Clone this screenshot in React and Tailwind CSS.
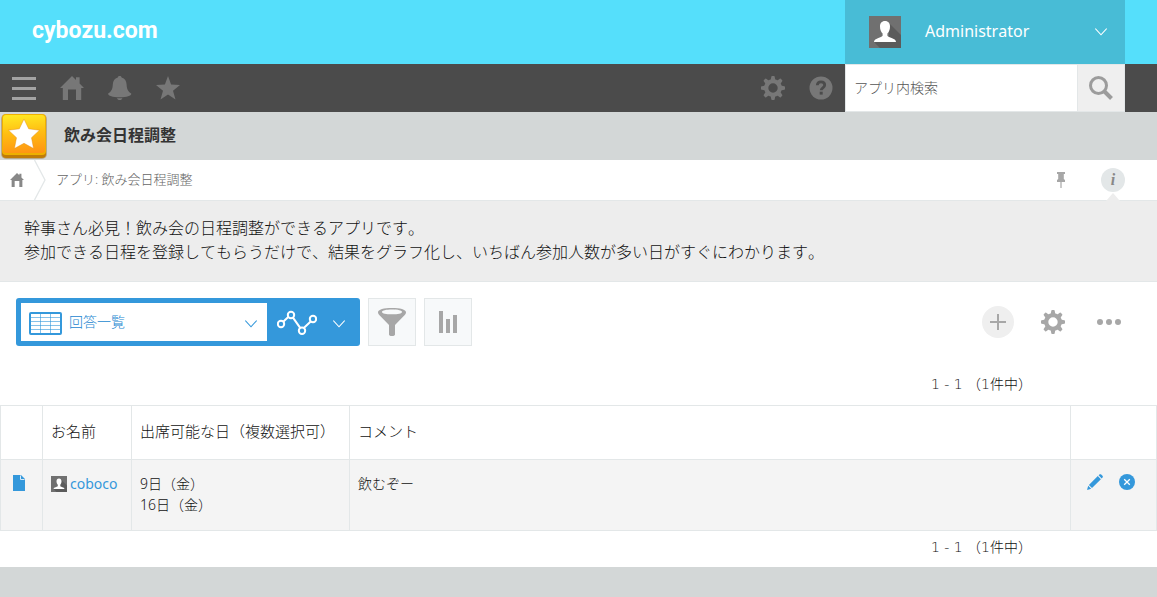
import React from "react";

const GEAR_ANGLES = [0, 45, 90, 135, 180, 225, 270, 315];

function GearIcon() {
  return (
    <svg width="24" height="24" viewBox="0 0 24 24" fill="currentColor" aria-hidden="true">
      <circle cx="12" cy="12" r="6.8" fill="none" stroke="currentColor" strokeWidth="4.2" />
      {GEAR_ANGLES.map((a) => (
        <path key={a} d="M9.6 4.5 10.3 0.7Q10.4 0 11 0h2q.6 0 .7.7L14.4 4.5z" transform={`rotate(${a} 12 12)`} />
      ))}
    </svg>
  );
}

function HomeIcon({ size }) {
  return (
    <svg width={size} height={size} viewBox="0 0 24 24" fill="currentColor" aria-hidden="true">
      <path d="M12 0 16 4V1.3h3.6V7.5L24 12h-2.8v12H16V13.6H8V24H2.8V12H0z" />
    </svg>
  );
}

function BellIcon() {
  return (
    <svg width="24" height="24" viewBox="0 0 24 24" fill="currentColor" aria-hidden="true">
      <path d="M11.700 0c1.200 0 1.900.6 1.900 1.500 3.400 1 4.700 3.500 5 7.100.3 4.800 1.400 7 4.600 9 .7 1.700-3.900 3.700-11.500 3.700S-.5 19.300.2 17.600c3.200-2 4.300-4.200 4.600-9 .3-3.600 1.600-6.100 5-7.100C9.800.6 10.500 0 11.700 0z" />
      <path d="M9 22.200h5.400c-.3 1.200-1.300 1.800-2.700 1.800s-2.400-.6-2.700-1.800z" />
    </svg>
  );
}

function StarIcon() {
  return (
    <svg width="24" height="24" viewBox="0 0 24 24" fill="currentColor" aria-hidden="true">
      <path d="M12 0 15.100 8.600 24 9 17 14.700 19.500 23.500 12 18.500 4.500 23.500 7 14.700 0 9 8.900 8.600z" />
    </svg>
  );
}

function Avatar({ size }) {
  return (
    <svg width={size} height={size} viewBox="0 0 32 32" aria-hidden="true" className="shrink-0">
      <path fill="#707070" d="M0 0h32v32H0z" />
      <path fill="#5b5b5b" d="M20 7 32 19v13H11L5.500 26.500 20 20z" />
      <path
        fill="#fff"
        d="M16 5c3.300 0 5 2.300 5 5.500 0 3-1 5.500-2.600 7v2.300c.4 1.300 3.600 1.800 6.300 3.200 1.500.8 2.200 1.700 2.300 3H5c.1-1.300.8-2.200 2.300-3 2.700-1.400 5.900-1.900 6.300-3.200v-2.300C12 16 11 13.500 11 10.500 11 7.300 12.700 5 16 5z"
      />
    </svg>
  );
}

function ChevronDown() {
  return (
    <svg width="12" height="8" viewBox="0 0 12 8" fill="none" stroke="currentColor" strokeWidth="1.100" aria-hidden="true">
      <path d="M0.300 0.500 6 6.800 11.700 0.500" />
    </svg>
  );
}

function AppIcon() {
  return (
    <svg width="48" height="48" viewBox="0 0 48 48" aria-hidden="true" className="shrink-0">
      <defs>
        <linearGradient id="appFace" x1="0.500" y1="0" x2="0.600" y2="1">
          <stop offset="0" stopColor="#ffe722" />
          <stop offset="0.450" stopColor="#ffbe12" />
          <stop offset="1" stopColor="#ff9514" />
        </linearGradient>
      </defs>
      <rect x="1" y="2" width="46" height="45" rx="5" fill="#b9a98a" />
      <rect x="2" y="4" width="44" height="42" rx="4" fill="#c07c08" />
      <rect x="2" y="2" width="44" height="41" rx="4" fill="#eeb000" />
      <rect x="3" y="3" width="42" height="38" rx="3" fill="url(#appFace)" />
      <path
        d="M24 7 28.700 16.800 39.500 18.200 31.500 25.700 33.600 36.500 24 31.300 14.400 36.500 16.500 25.700 8.500 18.200 19.300 16.800z"
        fill="#fff"
        stroke="#e58a10"
        strokeOpacity="0.450"
        strokeWidth="1"
      />
    </svg>
  );
}

function NavButton({ label, children, className = "text-[#777]" }) {
  return (
    <button type="button" aria-label={label} className={`flex size-12 items-center justify-center ${className}`}>
      {children}
    </button>
  );
}

function ToolButton({ label, children }) {
  return (
    <button type="button" aria-label={label} className="flex size-12 items-center justify-center border border-[#e3e7e8] bg-[#f7f9fa] text-[#a7a7a7]">
      {children}
    </button>
  );
}

function Pager() {
  return (
    <div className="flex justify-end pr-[125px] font-['DejaVu_Sans','Noto_Sans_CJK_JP',sans-serif] text-sm whitespace-pre">
      1 - 1 （1件中）
    </div>
  );
}

function Header() {
  return (
    <header className="flex h-16 items-center justify-between bg-[#55dffb] pr-8 pl-8">
      <a href="#" className="pb-[2px] font-['Roboto',sans-serif] text-[23px] leading-8 font-bold text-white">
        cybozu.com
      </a>
      <button type="button" className="flex h-16 w-[280px] items-center bg-[#48bcd6] px-6 text-left text-base font-normal text-white">
        <Avatar size={32} />
        <span className="flex-1 pb-[2px] pl-6">Administrator</span>
        <span className="-mr-[6px]">
          <ChevronDown />
        </span>
      </button>
    </header>
  );
}

function NavBar() {
  return (
    <nav className="flex h-12 items-center bg-[#4b4b4b] pr-8">
      <NavButton label="メニュー" className="text-[#a3a3a3]">
        <svg width="24" height="24" viewBox="0 0 24 24" fill="currentColor" aria-hidden="true">
          <path d="M0 1h24v3H0zM0 11h24v3H0zM0 21h24v3H0z" />
        </svg>
      </NavButton>
      <NavButton label="ポータル">
        <HomeIcon size={24} />
      </NavButton>
      <NavButton label="通知">
        <BellIcon />
      </NavButton>
      <NavButton label="ブックマーク">
        <StarIcon />
      </NavButton>
      <div className="flex-1" />
      <NavButton label="設定">
        <GearIcon />
      </NavButton>
      <NavButton label="ヘルプ">
        <svg width="24" height="24" viewBox="0 0 24 24" aria-hidden="true">
          <circle cx="12" cy="12" r="11.500" fill="currentColor" />
          <path d="M8.300 9.300C8.400 6.900 10 5.900 12 5.900c2.200 0 3.700 1.200 3.700 3.100 0 2.900-3.500 2.700-3.500 5.300" fill="none" stroke="#4b4b4b" strokeWidth="2.800" />
          <path d="M10.700 15.700h3v2.900h-3z" fill="#4b4b4b" />
        </svg>
      </NavButton>
      <form role="search" className="flex h-12 w-[280px] border border-[#e3e7e8] bg-white">
        <input
          type="text"
          aria-label="アプリ内検索"
          placeholder="アプリ内検索"
          className="min-w-0 flex-1 px-2 text-sm text-[#333] placeholder:text-[#555] focus:outline-none"
        />
        <button type="button" aria-label="検索" className="flex w-[47px] items-center justify-center border-l border-[#e3e7e8] bg-[#efefef] text-[#9c9c9c]">
          <svg width="24" height="24" viewBox="0 0 24 24" fill="none" stroke="currentColor" aria-hidden="true">
            <circle cx="9.500" cy="9.500" r="8" strokeWidth="3" />
            <path d="m15.500 15.500 7 7" strokeWidth="4" />
          </svg>
        </button>
      </form>
    </nav>
  );
}

function Breadcrumb() {
  return (
    <div className="flex h-[41px] items-center border-b border-[#e3e7e8] bg-white pr-5 text-[13px] text-[#666]">
      <a href="#" aria-label="ホーム" className="flex w-[34px] justify-center text-[#888]">
        <HomeIcon size={14} />
      </a>
      <svg width="12" height="40" viewBox="0 0 12 40" fill="none" stroke="#e3e7e8" strokeWidth="1.300" aria-hidden="true">
        <path d="M0.500 0 11 20 0.500 40" />
      </svg>
      <span className="flex-1 pl-[10px]">アプリ: 飲み会日程調整</span>
      <button type="button" aria-label="固定する" className="flex h-10 w-9 items-center justify-center text-[#a7a7a7]">
        <svg width="8" height="16" viewBox="0 0 8 16" fill="currentColor" aria-hidden="true">
          <path d="M0 0h8v2H6.800v5L8 8v2H4.600v6H3.400v-6H0V8l1.200-1V2H0z" />
        </svg>
      </button>
      <button type="button" aria-label="アプリの説明" className="relative ml-[10px] flex h-10 w-12 items-center justify-center">
        <span className="flex size-6 items-center justify-center rounded-full bg-[#e3e7e8] font-['Liberation_Serif',serif] text-base leading-6 font-bold text-[#888] italic">
          i
        </span>
        <svg width="14" height="8" viewBox="0 0 14 8" className="absolute -bottom-px left-[17px]" aria-hidden="true">
          <path d="M0 8 7 0l7 8z" fill="#ededed" />
        </svg>
      </button>
    </div>
  );
}

function Toolbar() {
  return (
    <div className="flex items-center gap-2 pr-5 pl-4">
      <div className="flex h-12 w-[344px] items-center rounded-[3px] bg-[#3498db] p-[5px] pr-0">
        <div className="relative flex h-[38px] w-[246px] items-center bg-white text-[#3498db]">
          <svg width="33" height="23" viewBox="0 0 33 23" fill="none" stroke="currentColor" className="mt-[2px] ml-2 shrink-0" aria-hidden="true">
            <path d="M1 5.500h31M1 9.500h31M1 13.500h31M1 17.500h31M11.500 1v21M21.500 1v21" opacity="0.600" />
            <rect x="1" y="1" width="31" height="21" rx="1" strokeWidth="2" />
          </svg>
          <select aria-label="一覧" className="h-[38px] flex-1 appearance-none bg-transparent pl-[7px] text-sm text-[#1a86d0] focus:outline-none">
            <option>回答一覧</option>
          </select>
          <span className="pointer-events-none absolute top-[17px] right-[10px]">
            <ChevronDown />
          </span>
        </div>
        <button type="button" aria-label="グラフ" className="flex h-12 flex-1 items-center gap-4 pl-[10px] text-white">
          <svg width="40" height="26" viewBox="0 0 40 26" fill="none" stroke="currentColor" strokeWidth="2" aria-hidden="true">
            <path d="m6.500 12.500 5-4.700M15.800 8.300l7.400 10.500M26.800 19l7.400-7" />
            <circle cx="4" cy="15" r="3.200" />
            <circle cx="14" cy="6" r="3.200" />
            <circle cx="25" cy="21.800" r="3.200" />
            <circle cx="36" cy="10" r="3.200" />
          </svg>
          <span className="pt-[3px]">
            <ChevronDown />
          </span>
        </button>
      </div>
      <ToolButton label="絞り込む">
        <svg width="28" height="28" viewBox="0 0 28 28" fill="currentColor" aria-hidden="true">
          <path fillRule="evenodd" d="M14 0c8 0 14 1.500 14 4.300 0 1.200-.5 2-1.500 3L17 17v9.500c0 .8-.8 1.500-3 1.500s-3-.7-3-1.500V17L1.500 7.300C.5 6.300 0 5.500 0 4.300 0 1.500 6 0 14 0zm0 1.500C8 1.500 4 2.400 4 3.900s4 2.300 10 2.300 10-.8 10-2.300-4-2.400-10-2.400z" />
        </svg>
      </ToolButton>
      <ToolButton label="集計する">
        <svg width="18" height="22" viewBox="0 0 18 22" fill="currentColor" aria-hidden="true">
          <path d="M0 0h4v22H0zM7 8h4v14H7zM14 4h4v18h-4z" />
        </svg>
      </ToolButton>
      <div className="ml-auto flex text-[#a7a7a7]">
        <button type="button" aria-label="レコードを追加する" className="flex h-12 w-[54px] items-center justify-center">
          <span className="flex size-8 items-center justify-center rounded-full bg-[#efefef]">
            <svg width="16" height="16" viewBox="0 0 16 16" fill="currentColor" aria-hidden="true">
              <path d="M7 0h2v7h7v2H9v7H7V9H0V7h7z" />
            </svg>
          </span>
        </button>
        <button type="button" aria-label="アプリを設定する" className="flex h-12 w-14 items-center justify-center">
          <GearIcon />
        </button>
        <button type="button" aria-label="その他" className="flex h-12 w-14 items-center justify-center">
          <svg width="24" height="6" viewBox="0 0 24 6" fill="currentColor" aria-hidden="true">
            <circle cx="3" cy="3" r="3" />
            <circle cx="12" cy="3" r="3" />
            <circle cx="21" cy="3" r="3" />
          </svg>
        </button>
      </div>
    </div>
  );
}

function RecordTable() {
  const th = "border border-[#e3e7e8] px-2 pb-[2px] text-left text-[15px] font-light";
  const td = "border border-[#e3e7e8] px-2 pt-[13px] align-top";
  return (
    <table className="w-full table-fixed border-collapse text-sm leading-[21px]">
      <colgroup>
        <col className="w-[42px]" />
        <col className="w-[89px]" />
        <col className="w-[218px]" />
        <col />
        <col className="w-[86px]" />
      </colgroup>
      <thead>
        <tr className="h-[54px]">
          <th className={th} />
          <th className={th}>お名前</th>
          <th className={th}>出席可能な日（複数選択可）</th>
          <th className={th}>コメント</th>
          <th className={th} />
        </tr>
      </thead>
      <tbody>
        <tr className="h-[71px] bg-[#f4f4f4]">
          <td className={td}>
            <a href="#" aria-label="レコードの詳細" className="flex h-5 items-center pl-1 text-[#3498db]">
              <svg width="12" height="16" viewBox="0 0 12 16" aria-hidden="true">
                <path d="M0 0h8l4 4v12H0z" fill="currentColor" />
                <path d="M7.500 0.500v4H11.500" fill="none" stroke="#d6eaf8" />
              </svg>
            </a>
          </td>
          <td className={td}>
            <a href="#" className="flex items-center gap-[3px] font-normal text-[#3498db]">
              <Avatar size={16} />
              coboco
            </a>
          </td>
          <td className={td}>
            9日（金）
            <br />
            16日（金）
          </td>
          <td className={td}>飲むぞー</td>
          <td className={td}>
            <div className="flex h-[18px] items-center gap-4 pl-2 text-[#3498db]">
              <button type="button" aria-label="編集">
                <svg width="16" height="16" viewBox="0 0 16 16" fill="currentColor" className="block" aria-hidden="true">
                  <path d="m0 16 1.200-4.200 3 3zM1.900 11 10.800 2.100l3.100 3.100L5 14.100zM11.600 1.300 12.400.500c.5-.5 1.300-.5 1.800 0l1.300 1.300c.5.500.5 1.300 0 1.800l-.8.800z" />
                </svg>
              </button>
              <button type="button" aria-label="削除">
                <svg width="16" height="16" viewBox="0 0 16 16" className="block" aria-hidden="true">
                  <circle cx="8" cy="8" r="8" fill="currentColor" />
                  <path d="m5.200 5.200 5.600 5.600M10.800 5.200l-5.600 5.600" stroke="#fff" strokeWidth="1.300" />
                </svg>
              </button>
            </div>
          </td>
        </tr>
      </tbody>
    </table>
  );
}

export default function App() {
  return (
    <div className="min-h-screen bg-[#d3d7d7] font-['Noto_Sans','Noto_Sans_CJK_JP',sans-serif] font-light text-[#111] [font-kerning:none]">
      <Header />
      <NavBar />
      <div className="flex h-12 items-center gap-4">
        <AppIcon />
        <h1 className="pb-[2px] text-base font-bold text-[#333]">飲み会日程調整</h1>
      </div>
      <Breadcrumb />
      <p className="border-b border-[#e3e7e8] bg-[#ededed] px-6 pt-[15px] pb-[17px] text-base">
        幹事さん必見！飲み会の日程調整ができるアプリです。
        <br />
        参加できる日程を登録してもらうだけで、結果をグラフ化し、いちばん参加人数が多い日がすぐにわかります。
      </p>
      <main className="bg-white pt-4 pb-[10px]">
        <Toolbar />
        <div className="pt-7 pb-[11px]">
          <Pager />
        </div>
        <RecordTable />
        <div className="pt-[6px]">
          <Pager />
        </div>
      </main>
    </div>
  );
}
